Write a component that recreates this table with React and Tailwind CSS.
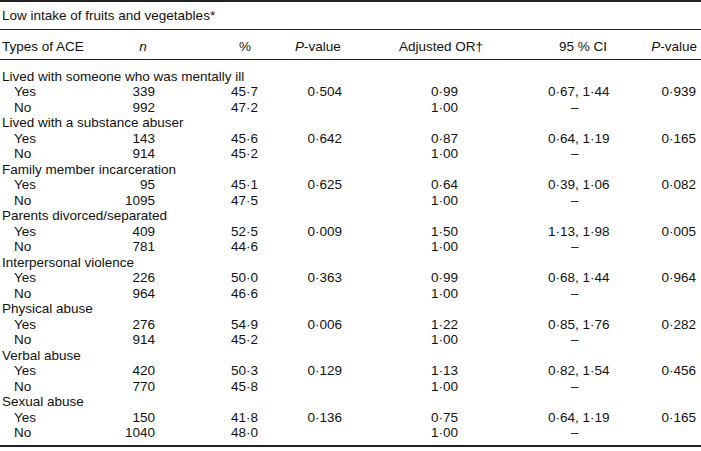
import React from "react";

const groups = [
  { label: "Lived with someone who was mentally ill", yes: ["339", "45·7", "0·504", "0·99", "0·67, 1·44", "0·939"], no: ["992", "47·2"] },
  { label: "Lived with a substance abuser", yes: ["143", "45·6", "0·642", "0·87", "0·64, 1·19", "0·165"], no: ["914", "45·2"] },
  { label: "Family member incarceration", yes: ["95", "45·1", "0·625", "0·64", "0·39, 1·06", "0·082"], no: ["1095", "47·5"] },
  { label: "Parents divorced/separated", yes: ["409", "52·5", "0·009", "1·50", "1·13, 1·98", "0·005"], no: ["781", "44·6"] },
  { label: "Interpersonal violence", yes: ["226", "50·0", "0·363", "0·99", "0·68, 1·44", "0·964"], no: ["964", "46·6"] },
  { label: "Physical abuse", yes: ["276", "54·9", "0·006", "1·22", "0·85, 1·76", "0·282"], no: ["914", "45·2"] },
  { label: "Verbal abuse", yes: ["420", "50·3", "0·129", "1·13", "0·82, 1·54", "0·456"], no: ["770", "45·8"] },
  { label: "Sexual abuse", yes: ["150", "41·8", "0·136", "0·75", "0·64, 1·19", "0·165"], no: ["1040", "48·0"] },
];

function DataRow({ label, v, isNo }) {
  return (
    <div className="flex h-[15.5px] items-center whitespace-nowrap">
      <div className="w-[100px] pl-[14px]">{label}</div>
      <div className="w-[55px] text-right">{v[0]}</div>
      <div className="w-[103px] text-right">{v[1]}</div>
      <div className="w-[84px] text-right">{isNo ? "" : v[2]}</div>
      <div className="w-[116px] text-right">{isNo ? "1·00" : v[3]}</div>
      <div className={isNo ? "w-[172px] pl-[113px]" : "w-[172px] pl-[90px]"}>{isNo ? "–" : v[4]}</div>
      <div className="w-[66px] text-right">{isNo ? "" : v[5]}</div>
    </div>
  );
}

export default function App() {
  return (
    <div
      className="w-[701px] h-[451px] bg-white text-[#111] text-[13.5px] leading-[15.5px]"
      style={{ fontFamily: '"Liberation Sans", Arial, Helvetica, sans-serif' }}
    >
      <div className="border-t-2 border-[#222]" />
      <div className="pl-[2px] pt-[6px] pb-[5px] border-b border-[#222] whitespace-nowrap">
        Low intake of fruits and vegetables*
      </div>
      <div className="flex h-[30px] pt-[5px] items-center whitespace-nowrap border-b border-[#222]">
        <div className="w-[86px] pl-[2px]">Types of ACE</div>
        <div className="w-[114px] flex justify-center italic">n</div>
        <div className="w-[90px] flex justify-center">%</div>
        <div className="w-[56px] flex justify-center"><span><span className="italic">P</span>-value</span></div>
        <div className="w-[190px] flex justify-center">Adjusted OR†</div>
        <div className="w-[94px] flex justify-center">95 % CI</div>
        <div className="w-[67px] flex justify-end"><span><span className="italic">P</span>-value</span></div>
      </div>
      <div className="pt-[9px] pb-[4px] border-b-2 border-[#222]">
        {groups.map((g) => (
          <div key={g.label}>
            <div className="h-[15.5px] pl-[2px] whitespace-nowrap">{g.label}</div>
            <DataRow label="Yes" v={g.yes} />
            <DataRow label="No" v={g.no} isNo />
          </div>
        ))}
      </div>
    </div>
  );
}
